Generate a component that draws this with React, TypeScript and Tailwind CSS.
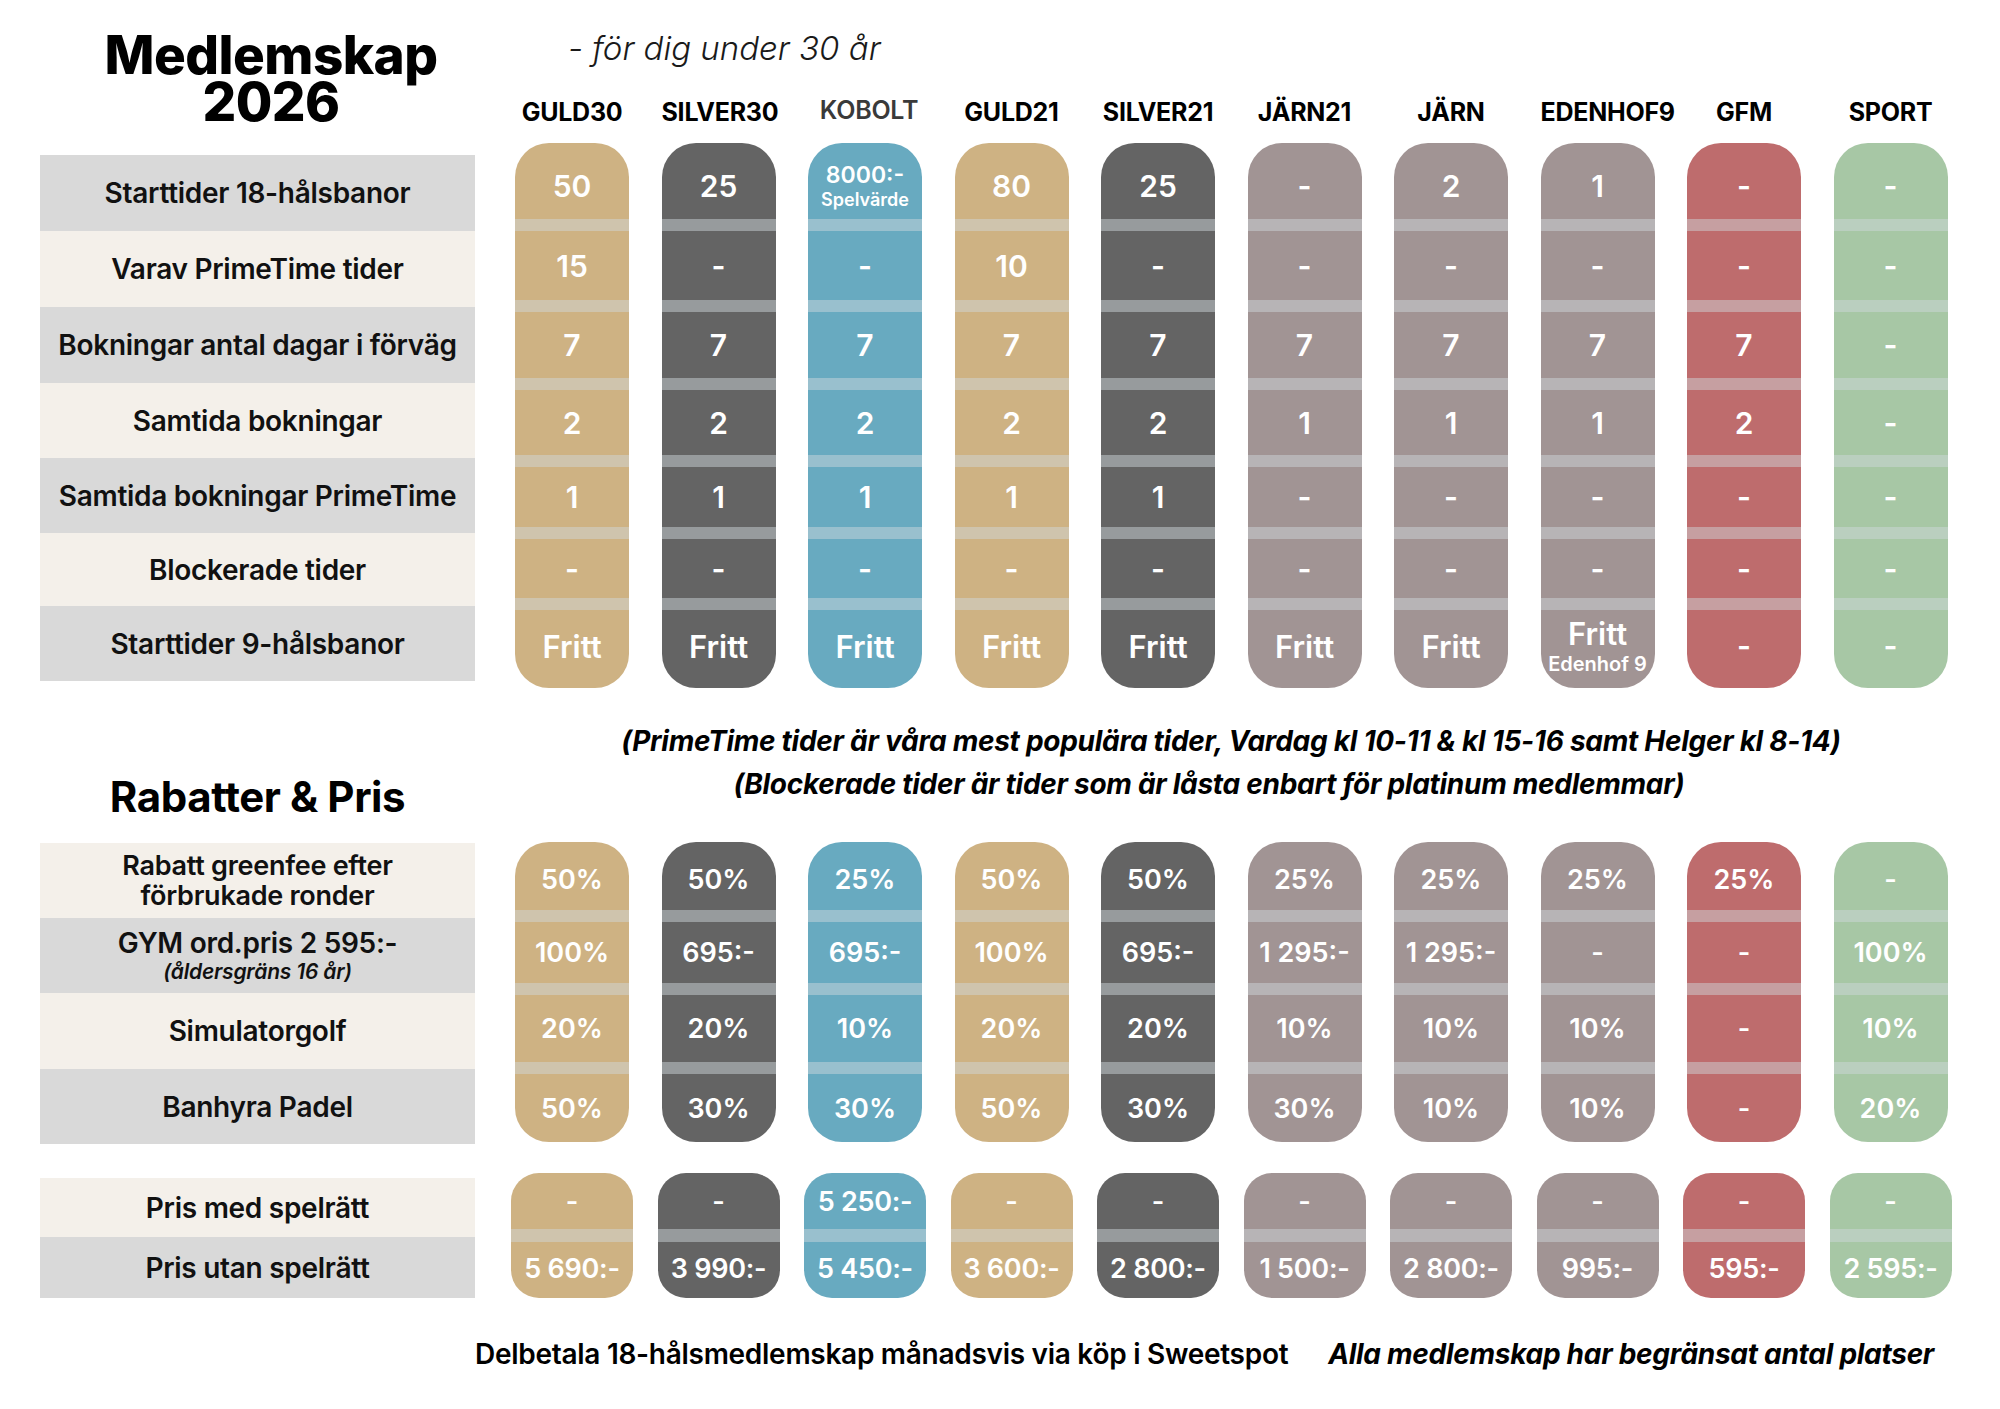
import { Fragment, type ReactNode } from "react";
import clsx from "clsx";

type Tone = "gold" | "dark" | "blue" | "mauve" | "red" | "green";

const TONE_BG: Record<Tone, string> = {
  gold: "bg-[#ceb283]",
  dark: "bg-[#646464]",
  blue: "bg-[#68aac0]",
  mauve: "bg-[#a19494]",
  red: "bg-[#be6c6d]",
  green: "bg-[#a7c7a5]",
};

const COLUMNS: { name: string; tone: Tone; muted?: boolean }[] = [
  { name: "GULD30", tone: "gold" },
  { name: "SILVER30", tone: "dark" },
  { name: "KOBOLT", tone: "blue", muted: true },
  { name: "GULD21", tone: "gold" },
  { name: "SILVER21", tone: "dark" },
  { name: "JÄRN21", tone: "mauve" },
  { name: "JÄRN", tone: "mauve" },
  { name: "EDENHOF9", tone: "mauve" },
  { name: "GFM", tone: "red" },
  { name: "SPORT", tone: "green" },
];

const BAND = "h-[12px] shrink-0 bg-[rgba(209,217,222,0.47)]";
const GRID = "grid grid-cols-[repeat(10,114px)] gap-x-[32.5px]";

// booking table ------------------------------------------------------------

const BOOKING_LABELS = [
  "Starttider 18-hålsbanor",
  "Varav PrimeTime tider",
  "Bokningar antal dagar i förväg",
  "Samtida bokningar",
  "Samtida bokningar PrimeTime",
  "Blockerade tider",
  "Starttider 9-hålsbanor",
];
const BOOKING_ROW_H = ["h-[76px]", "h-[76px]", "h-[76px]", "h-[75px]", "h-[75px]", "h-[73px]", "h-[75px]"];
const BOOKING_CELL_H = [
  "h-[76px] pt-[10px]",
  "h-[69px]",
  "h-[66px]",
  "h-[65px]",
  "h-[60px]",
  "h-[59px]",
  "h-[78px] pb-[6px]",
];

const BOOKING: ReactNode[][] = [
  ["50", "15", "7", "2", "1", "-", "Fritt"],
  ["25", "-", "7", "2", "1", "-", "Fritt"],
  [
    <div key="k" className="flex flex-col items-center leading-none">
      <span className="text-[23px] font-semibold">8000:-</span>
      <span className="mt-[4px] text-[18px] font-semibold">Spelvärde</span>
    </div>,
    "-",
    "7",
    "2",
    "1",
    "-",
    "Fritt",
  ],
  ["80", "10", "7", "2", "1", "-", "Fritt"],
  ["25", "-", "7", "2", "1", "-", "Fritt"],
  ["-", "-", "7", "1", "-", "-", "Fritt"],
  ["2", "-", "7", "1", "-", "-", "Fritt"],
  [
    "1",
    "-",
    "7",
    "1",
    "-",
    "-",
    <div key="e" className="flex flex-col items-center leading-none">
      <span className="text-[31px] font-semibold">Fritt</span>
      <span className="mt-[5px] text-[20px] font-semibold">Edenhof 9</span>
    </div>,
  ],
  ["-", "-", "7", "2", "-", "-", "-"],
  ["-", "-", "-", "-", "-", "-", "-"],
];

// discounts ----------------------------------------------------------------

const DISCOUNT_ROW_H = ["h-[75px]", "h-[75px]", "h-[76px]", "h-[75px]"];
const DISCOUNT_CELL_H = ["h-[68px] pt-[6px]", "h-[61px]", "h-[67px]", "h-[68px]"];

const DISCOUNTS: string[][] = [
  ["50%", "100%", "20%", "50%"],
  ["50%", "695:-", "20%", "30%"],
  ["25%", "695:-", "10%", "30%"],
  ["50%", "100%", "20%", "50%"],
  ["50%", "695:-", "20%", "30%"],
  ["25%", "1 295:-", "10%", "30%"],
  ["25%", "1 295:-", "10%", "10%"],
  ["25%", "-", "10%", "10%"],
  ["25%", "-", "-", "-"],
  ["-", "100%", "10%", "20%"],
];

// prices -------------------------------------------------------------------

const PRICES: string[][] = [
  ["-", "5 690:-"],
  ["-", "3 990:-"],
  ["5 250:-", "5 450:-"],
  ["-", "3 600:-"],
  ["-", "2 800:-"],
  ["-", "1 500:-"],
  ["-", "2 800:-"],
  ["-", "995:-"],
  ["-", "595:-"],
  ["-", "2 595:-"],
];

function LabelRow({ shade, height, children }: { shade: "gray" | "cream"; height: string; children: ReactNode }) {
  return (
    <div
      className={clsx(
        "flex flex-col items-center justify-center text-center",
        height,
        shade === "gray" ? "bg-[#d9d9d9]" : "bg-[#f4f0ea]",
      )}
    >
      {children}
    </div>
  );
}

function Pill({
  tone,
  cells,
  heights,
  radius,
  valueClass,
  bandClass = BAND,
  className,
}: {
  tone: Tone;
  cells: ReactNode[];
  heights: string[];
  radius: string;
  valueClass: string;
  bandClass?: string;
  className?: string;
}) {
  return (
    <div className={clsx("flex flex-col overflow-hidden text-white", TONE_BG[tone], radius, className)}>
      {cells.map((cell, i) => (
        <Fragment key={i}>
          {i > 0 && <div className={bandClass} />}
          <div className={clsx("flex shrink-0 items-center justify-center leading-none", heights[i])}>
            {typeof cell === "string" ? (
              <span className={clsx(valueClass, cell === "Fritt" && "text-[31px]")}>{cell}</span>
            ) : (
              cell
            )}
          </div>
        </Fragment>
      ))}
    </div>
  );
}

export default function App() {
  return (
    <div className="h-[1409px] w-[2000px] overflow-hidden bg-white font-['Inter','Liberation_Sans',sans-serif] text-[#111]">
      {/* header */}
      <div className="flex h-[143px] pl-[40px]">
        <div className="w-[435px] pt-[32px] pl-[27px] text-center text-[53px] leading-[47px] font-extrabold tracking-[-0.01em] text-black">
          Medlemskap
          <br />
          2026
        </div>
        <div className="ml-[40px] flex w-[1432px] flex-col">
          <p className="pt-[29px] pl-[53px] text-[33px] leading-[38px] font-light italic text-[#1a1a1a]">
            - för dig under 30 år
          </p>
          <div className={clsx(GRID, "mt-auto pb-[16px]")}>
            {COLUMNS.map((c) => (
              <div
                key={c.name}
                className={clsx(
                  "text-center text-[25px] leading-[30px] font-bold whitespace-nowrap tracking-[-0.01em]",
                  c.muted ? "-translate-y-[2px] translate-x-[4px] font-semibold text-[#3a3a3a]" : "text-black",
                )}
              >
                {c.name}
              </div>
            ))}
          </div>
        </div>
      </div>

      {/* booking rules */}
      <div className="flex items-start gap-[40px] pl-[40px]">
        <div className="mt-[12px] flex w-[435px] flex-col">
          {BOOKING_LABELS.map((label, i) => (
            <LabelRow key={label} shade={i % 2 === 0 ? "gray" : "cream"} height={BOOKING_ROW_H[i]}>
              <span className="text-[28px] leading-none font-semibold tracking-[-0.01em]">{label}</span>
            </LabelRow>
          ))}
        </div>
        <div className={GRID}>
          {COLUMNS.map((c, i) => (
            <Pill
              key={c.name}
              tone={c.tone}
              cells={BOOKING[i]}
              heights={BOOKING_CELL_H}
              radius="rounded-[34px]"
              valueClass="text-[30px] font-semibold"
            />
          ))}
        </div>
      </div>

      {/* notes + discounts title */}
      <div className="flex h-[154px] gap-[40px] pl-[40px]">
        <h2 className="w-[435px] pt-[88px] text-center text-[42px] leading-[42px] font-bold tracking-[-0.01em] text-black">
          Rabatter &amp; Pris
        </h2>
        <div className="w-[1432px] pt-[32px] text-center text-[28px] leading-[43px] font-bold italic tracking-[-0.01em] text-black">
          <p>(PrimeTime tider är våra mest populära tider, Vardag kl 10-11 &amp; kl 15-16 samt Helger kl 8-14)</p>
          <p className="pr-[44px]">(Blockerade tider är tider som är låsta enbart för platinum medlemmar)</p>
        </div>
      </div>

      {/* discounts */}
      <div className="flex items-start gap-[40px] pl-[40px]">
        <div className="mt-[1px] flex w-[435px] flex-col">
          <LabelRow shade="cream" height={DISCOUNT_ROW_H[0]}>
            <span className="text-[27px] leading-[30px] font-semibold tracking-[-0.01em]">
              Rabatt greenfee efter
              <br />
              förbrukade ronder
            </span>
          </LabelRow>
          <LabelRow shade="gray" height={DISCOUNT_ROW_H[1]}>
            <span className="text-[28px] leading-[32px] font-semibold tracking-[-0.01em]">GYM ord.pris 2 595:-</span>
            <span className="text-[21px] leading-[26px] font-semibold italic tracking-[-0.01em]">(åldersgräns 16 år)</span>
          </LabelRow>
          <LabelRow shade="cream" height={DISCOUNT_ROW_H[2]}>
            <span className="text-[28px] leading-none font-semibold tracking-[-0.01em]">Simulatorgolf</span>
          </LabelRow>
          <LabelRow shade="gray" height={DISCOUNT_ROW_H[3]}>
            <span className="text-[28px] leading-none font-semibold tracking-[-0.01em]">Banhyra Padel</span>
          </LabelRow>
        </div>
        <div className={GRID}>
          {COLUMNS.map((c, i) => (
            <Pill
              key={c.name}
              tone={c.tone}
              cells={DISCOUNTS[i]}
              heights={DISCOUNT_CELL_H}
              radius="rounded-[34px]"
              valueClass="text-[27px] font-semibold whitespace-nowrap"
            />
          ))}
        </div>
      </div>

      {/* prices */}
      <div className="mt-[29px] flex items-start gap-[40px] pl-[40px]">
        <div className="mt-[5px] flex w-[435px] flex-col">
          <LabelRow shade="cream" height="h-[59px]">
            <span className="text-[28px] leading-none font-semibold tracking-[-0.01em]">Pris med spelrätt</span>
          </LabelRow>
          <LabelRow shade="gray" height="h-[61px]">
            <span className="text-[28px] leading-none font-semibold tracking-[-0.01em]">Pris utan spelrätt</span>
          </LabelRow>
        </div>
        <div className={GRID}>
          {COLUMNS.map((c, i) => (
            <Pill
              key={c.name}
              tone={c.tone}
              cells={PRICES[i]}
              heights={["h-[56px]", "h-[56px] pb-[4px]"]}
              radius="rounded-[28px]"
              bandClass="h-[13px] shrink-0 bg-[rgba(209,217,222,0.47)]"
              valueClass="text-[27px] font-semibold whitespace-nowrap tracking-[-0.01em]"
              className="-mx-[4px]"
            />
          ))}
        </div>
      </div>

      {/* footer */}
      <div className="mt-[40px] flex pr-[66px] pl-[475px] text-[28px] leading-[32px] font-semibold tracking-[-0.01em] text-black">
        <p>Delbetala 18-hålsmedlemskap månadsvis via köp i Sweetspot</p>
        <p className="ml-auto font-bold italic">Alla medlemskap har begränsat antal platser</p>
      </div>
    </div>
  );
}
